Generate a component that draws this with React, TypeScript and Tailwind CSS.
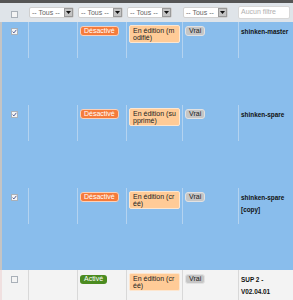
const cols = "grid grid-cols-[26px_49px_49px_56px_56px_57px]";

const Check = ({ checked }: { checked?: boolean }) => (
  <span className="w-[7px] h-[7px] border border-[#a9b0b8] bg-[#f4f4f4] flex items-center justify-center">
    {checked && (
      <svg width="5" height="5" viewBox="0 0 5 5">
        <path d="M0.6 2.6 L1.9 3.9 L4.4 0.8" fill="none" stroke="#3a4a8a" strokeWidth="0.9" />
      </svg>
    )}
  </span>
);

const Select = () => (
  <div className="w-[45px] h-[11px] bg-white border border-[#d0d0d0] rounded-[2px] flex items-center">
    <span className="flex-1 pl-[2px] text-[7px] leading-none text-[#666]">-- Tous --</span>
    <span className="w-[9px] h-[9px] bg-[#c4c4c4] border border-[#999] flex items-center justify-center">
      <svg width="5" height="3" viewBox="0 0 5 3">
        <path d="M0 0 H5 L2.5 3 Z" fill="#111" />
      </svg>
    </span>
  </div>
);

type Row = {
  checked: boolean;
  active: boolean;
  edit: [string, string];
  name: string[];
};

const rows: Row[] = [
  { checked: true, active: false, edit: ["En édition (m", "odifié)"], name: ["shinken-master"] },
  { checked: true, active: false, edit: ["En édition (su", "pprimé)"], name: ["shinken-spare"] },
  { checked: true, active: false, edit: ["En édition (cr", "éé)"], name: ["shinken-spare", "[copy]"] },
  { checked: false, active: true, edit: ["En édition (cr", "éé)"], name: ["SUP 2 -", "V02.04.01"] },
];

export default function App() {
  return (
    <div
      className="w-[293px] h-[300px] overflow-hidden bg-[#f3f3f3] text-[7px] text-[#111]"
      style={{ fontFamily: '"Liberation Sans", Arial, sans-serif' }}
    >
      <div className="h-[3px] bg-[#555]" />
      <div className={`${cols} h-[19px] bg-[#dfe4e9] items-center`}>
        <div className="flex justify-center pl-[3px] pt-[3px]">
          <Check />
        </div>
        <div className="pl-[3px]">
          <Select />
        </div>
        <div className="pl-[3px]">
          <Select />
        </div>
        <div className="pl-[3px]">
          <Select />
        </div>
        <div className="pl-[3px]">
          <Select />
        </div>
        <div className="pl-[2px]">
          <div className="w-[52px] h-[13px] bg-white border border-[#d8d8d8] rounded-[2px] flex items-center pl-[2px] text-[7px] text-[#b0b0b0]">
            Aucun filtre
          </div>
        </div>
      </div>
      {rows.map((r, i) => (
        <div
          key={i}
          className={`${cols} items-start ${
            r.active ? "h-[30px] bg-[#f3f3f3] border-l-2 border-[#f0e0e0]" : i === 2 ? "h-[82px] bg-[#89bdec] border-l-2 border-[#c4c4c4]" : "h-[83px] bg-[#89bdec] border-l-2 border-[#c4c4c4]"
          }`}
        >
          <div className="h-[36px] flex justify-center pt-[6px] pr-[2px]">
            <Check checked={r.checked} />
          </div>
          <div className={`h-[36px] border-l ${r.active ? "border-[#d8d8d8]" : "border-[#b4d3f0]"}`} />
          <div className={`h-[36px] border-l pl-[2px] pt-[4px] ${r.active ? "border-[#d8d8d8]" : "border-[#b4d3f0]"}`}>
            {r.active ? (
              <span className="inline-block bg-[#4b8b1f] text-white rounded-[3px] px-[4px] leading-[8px] py-[0.5px]">
                Activé
              </span>
            ) : (
              <span className="inline-block bg-[#f57b3b] text-white rounded-[3px] border border-[#fbd0b8] px-[3px] leading-[8px]">
                Désactivé
              </span>
            )}
          </div>
          <div className={`h-[36px] border-l pl-[2px] pt-[3px] ${r.active ? "border-[#d8d8d8]" : "border-[#b4d3f0]"}`}>
            <div className="w-[51px] bg-[#ffcb97] border border-[#fde6cf] rounded-[2px] px-[3px] py-[1px] leading-[7px] text-[#222]">
              <div>{r.edit[0]}</div>
              <div>{r.edit[1]}</div>
            </div>
          </div>
          <div className={`h-[36px] border-l pl-[2px] pt-[4px] ${r.active ? "border-[#d8d8d8]" : "border-[#b4d3f0]"}`}>
            <span className="inline-block bg-[#c6c6c6] border border-[#e2e2e2] rounded-[3px] px-[3px] leading-[8px] text-[#222]">
              Vrai
            </span>
          </div>
          <div className={`h-[36px] border-l pl-[2px] pt-[4px] leading-[12px] text-[6.4px] font-bold ${r.active ? "border-[#d8d8d8]" : "border-[#b4d3f0]"}`}>
            {r.name.map((n) => (
              <div key={n}>{n}</div>
            ))}
          </div>
        </div>
      ))}
    </div>
  );
}
